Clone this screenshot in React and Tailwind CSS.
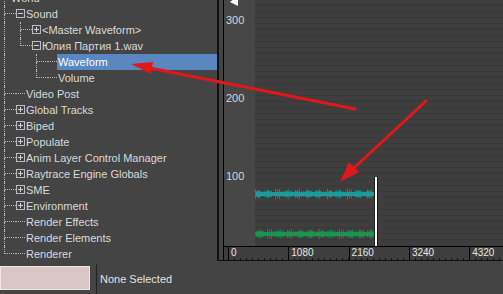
import React from "react";

const TREE = [
  { label: "World", cells: ["root"] },
  { label: "Sound", cells: ["tee"], box: "minus" },
  { label: "<Master Waveform>", cells: ["pipe", "tee"], box: "plus" },
  { label: "Юлия Партия 1.wav", cells: ["pipe", "elbow"], box: "minus" },
  { label: "Waveform", cells: ["pipe", "blank", "tee"], selected: true },
  { label: "Volume", cells: ["pipe", "blank", "elbow"] },
  { label: "Video Post", cells: ["tee"] },
  { label: "Global Tracks", cells: ["tee"], box: "plus" },
  { label: "Biped", cells: ["tee"], box: "plus" },
  { label: "Populate", cells: ["tee"], box: "plus" },
  { label: "Anim Layer Control Manager", cells: ["tee"], box: "plus" },
  { label: "Raytrace Engine Globals", cells: ["tee"], box: "plus" },
  { label: "SME", cells: ["tee"], box: "plus" },
  { label: "Environment", cells: ["tee"], box: "plus" },
  { label: "Render Effects", cells: ["tee"] },
  { label: "Render Elements", cells: ["tee"] },
  { label: "Renderer", cells: ["elbow"] },
];

const RULER = ["0", "1080", "2160", "3240", "4320"];

function Cell({ type }) {
  if (type === "blank") return <div className="w-4 h-4 shrink-0" />;
  if (type === "pipe")
    return (
      <div className="w-4 h-4 shrink-0 pl-[4px]">
        <div className="h-full border-l border-dotted border-[#b8b8b8]" />
      </div>
    );
  if (type === "root")
    return (
      <div className="w-[10px] h-4 shrink-0 pl-[4px] flex flex-col">
        <div className="h-[8px]" />
        <div className="h-[8px] border-l border-dotted border-[#b8b8b8]" />
      </div>
    );
  return (
    <div className="w-4 h-4 shrink-0 pl-[4px] flex flex-col">
      <div className="h-[8px] border-l border-b border-dotted border-[#b8b8b8]" />
      {type === "tee" ? (
        <div className="h-[8px] border-l border-dotted border-[#b8b8b8]" />
      ) : (
        <div className="h-[8px]" />
      )}
    </div>
  );
}

function ExpandBox({ kind }) {
  return (
    <svg width="9" height="9" viewBox="0 0 9 9" className="shrink-0 mt-[3px]">
      <rect x="0.5" y="0.5" width="8" height="8" fill="none" stroke="#bdbdbd" />
      <path d="M2 4.5H7" stroke="#d4d4d4" />
      {kind === "plus" && <path d="M4.5 2V7" stroke="#d4d4d4" />}
    </svg>
  );
}

function TreeRow({ row }) {
  const isRoot = row.cells[0] === "root";
  return (
    <div className="flex h-4 items-start">
      {row.cells.map((c, i) => (
        <Cell key={i} type={c} />
      ))}
      {!isRoot &&
        (row.box ? (
          <ExpandBox kind={row.box} />
        ) : (
          <div className="w-[9px] h-4 shrink-0">
            <div className="h-[8px] border-b border-dotted border-[#b8b8b8]" />
          </div>
        ))}
      <span
        className={`h-4 leading-4 pl-[1px] pr-1 whitespace-nowrap ${
          row.selected ? "flex-1 bg-[#5b87c0] text-white" : "text-[#dadada]"
        }`}
      >
        {row.label}
      </span>
    </div>
  );
}

// pseudo-random spiky band, drawn as vertical strokes
function wavePath(cy, seed) {
  let d = "";
  for (let x = 0; x <= 119; x++) {
    const s = Math.abs(Math.sin((x + seed) * 1.7) * Math.sin((x + seed) * 0.31));
    const a = 1.5 + s * 3 + (x % 4 === 0 ? 1 : 0);
    d += `M${x + 0.5} ${(cy - a).toFixed(1)}V${(cy + a).toFixed(1)}`;
  }
  return d;
}

function Graph() {
  return (
    <svg width="248" height="246" viewBox="0 0 248 246" className="block">
      <path d={wavePath(194, 3)} stroke="#1b8f8f" strokeWidth="1" opacity="0.9" />
      <rect x="1" y="192" width="119" height="4" fill="#1e9a9a" />
      <path d={wavePath(234, 11)} stroke="#168a48" strokeWidth="1" opacity="0.9" />
      <rect x="1" y="232" width="119" height="4" fill="#1a9450" />
      <rect x="119" y="177" width="1" height="69" fill="#222" />
      <rect x="120" y="177" width="2" height="69" fill="#ffffff" />
      <rect x="122" y="177" width="1" height="69" fill="#1a1a1a" />
    </svg>
  );
}

export default function App() {
  return (
    <div
      className="w-[503px] h-[294px] overflow-hidden bg-[#444444] relative text-[11px]"
      style={{ fontFamily: '"Liberation Sans", "Noto Sans", sans-serif' }}
    >
      <div className="flex h-[264px]">
        {/* ── Track tree ── */}
        <div className="w-[217px] shrink-0 overflow-hidden">
          <div className="-mt-[10px] flex flex-col">
            {TREE.map((row) => (
              <TreeRow key={row.label} row={row} />
            ))}
          </div>
        </div>

        {/* ── Curve view ── */}
        <div className="flex-1 min-w-0">
          <div className="h-[261px] border-l-2 border-b border-[#111] pl-[4px] flex">
            <div className="flex-1 border-l border-black flex flex-col min-w-0">
              <div className="flex-1 flex min-h-0">
                <div className="w-[31px] shrink-0 bg-[#474747] flex flex-col pl-[2px] pt-[14px] gap-[66px] text-[#d6d6d6] leading-[12px] relative">
                  <svg width="12" height="8" className="absolute left-[5px] -top-[2px]">
                    <polygon points="1,4 9,-2 9,8" fill="#ffffff" />
                  </svg>
                  <span>300</span>
                  <span>200</span>
                  <span>100</span>
                </div>
                <div className="flex-1 bg-[repeating-linear-gradient(to_bottom,#3e3e3e_0px,#3e3e3e_5px,#393939_5px,#393939_6px)]">
                  <Graph />
                </div>
              </div>
              <div className="h-[14px] border-t border-black bg-[#3e3e3e] flex pl-[4px] overflow-hidden">
                {RULER.map((t) => (
                  <div
                    key={t}
                    className="w-[60.3px] shrink-0 border-l border-black flex flex-col justify-between"
                  >
                    <span className="pl-[2px] text-[10px] leading-[11px] text-[#e6e6e6]">{t}</span>
                    <div className="h-[3px] bg-[repeating-linear-gradient(to_right,transparent_0px,transparent_5.03px,#111_5.03px,#111_6.03px)]" />
                  </div>
                ))}
              </div>
            </div>
          </div>
        </div>
      </div>

      {/* ── Status bar ── */}
      <div className="h-[30px] flex items-stretch">
        <div className="w-[90px] h-[24px] mt-[2px] border border-[#f0e6e6] bg-[#dbc6c6]" />
        <div className="w-px ml-[6px] bg-[#222]" />
        <span className="ml-[3px] self-center text-[11px] text-[#e2e2e2]">None Selected</span>
      </div>

      {/* ── Annotation arrows ── */}
      <svg width="503" height="294" className="absolute inset-0 pointer-events-none">
        <line x1="355" y1="109" x2="150" y2="68" stroke="#e3161a" strokeWidth="3" strokeLinecap="round" />
        <polygon points="131,64 153,62 151,74" fill="#e3161a" />
        <line x1="426" y1="101" x2="354" y2="168" stroke="#e3161a" strokeWidth="3" strokeLinecap="round" />
        <polygon points="340,182 349,162 359,172" fill="#e3161a" />
      </svg>
    </div>
  );
}
